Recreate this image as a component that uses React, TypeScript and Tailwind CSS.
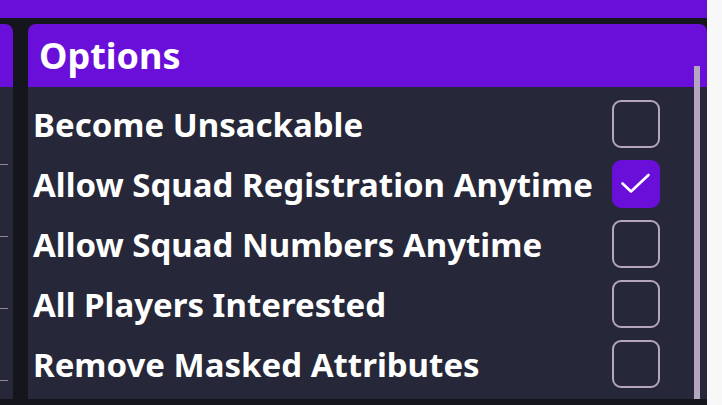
import { useState } from 'react';

const OPTIONS = [
  { label: 'Become Unsackable', checked: false },
  { label: 'Allow Squad Registration Anytime', checked: true },
  { label: 'Allow Squad Numbers Anytime', checked: false },
  { label: 'All Players Interested', checked: false },
  { label: 'Remove Masked Attributes', checked: false },
];

function Checkbox({ checked, onToggle }: { checked: boolean; onToggle: () => void }) {
  return (
    <button
      onClick={onToggle}
      className={
        checked
          ? 'w-[48px] h-[48px] rounded-[9px] bg-[#6a0fd9] flex items-center justify-center shrink-0'
          : 'w-[48px] h-[48px] rounded-[9px] border-2 border-[#b4a6bf] shrink-0'
      }
    >
      {checked && (
        <svg width="48" height="48" viewBox="0 0 48 48" fill="none">
          <path d="M10.5 23.5 L19 31.5 L36.5 15" stroke="white" strokeWidth="2.6" strokeLinecap="round" strokeLinejoin="round" />
        </svg>
      )}
    </button>
  );
}

export default function App() {
  const [opts, setOpts] = useState(OPTIONS);

  const toggle = (i: number) =>
    setOpts((o) => o.map((x, j) => (j === i ? { ...x, checked: !x.checked } : x)));

  return (
    <div
      className="w-[722px] h-[405px] bg-[#f8f8f8] overflow-hidden"
      style={{ fontFamily: '"Noto Sans", "Open Sans", sans-serif' }}
    >
      <div className="w-[707px] h-full bg-[#15161d] flex flex-col">
        {/* barre du haut */}
        <div className="h-[18px] bg-[#6a0fd9] shrink-0" />

        <div className="flex-1 flex gap-[15px] pt-[6px] pb-[6px] min-h-0">
          {/* panneau gauche (coupé) */}
          <div className="w-[13px] flex flex-col rounded-tr-[8px] overflow-hidden">
            <div className="h-[63px] bg-[#6a0fd9] shrink-0" />
            <div className="flex-1 bg-[#262738] flex flex-col pt-[77px] gap-[71px]">
              {[0, 1, 2, 3].map((i) => (
                <div key={i} className="w-[8px] h-[1px] bg-[#8f8a99]" />
              ))}
            </div>
          </div>

          {/* panneau Options */}
          <div className="relative flex-1 flex flex-col rounded-t-[8px] overflow-hidden">
            <div className="h-[63px] bg-[#6a0fd9] shrink-0 flex items-center pl-[11px]">
              <h2 className="text-white font-bold text-[36px] leading-none">Options</h2>
            </div>
            <div className="flex-1 bg-[#262738] pt-[7px] pl-[5px] pr-[47px]">
              {opts.map((o, i) => (
                <div key={o.label} className="h-[60px] flex items-center justify-between">
                  <span className="text-white font-bold text-[33px] leading-none">{o.label}</span>
                  <Checkbox checked={o.checked} onToggle={() => toggle(i)} />
                </div>
              ))}
            </div>
            {/* scrollbar */}
            <div className="absolute right-[7px] top-[42px] bottom-0 w-[6px] bg-[#b4a6bf]" />
          </div>
        </div>
      </div>
    </div>
  );
}
